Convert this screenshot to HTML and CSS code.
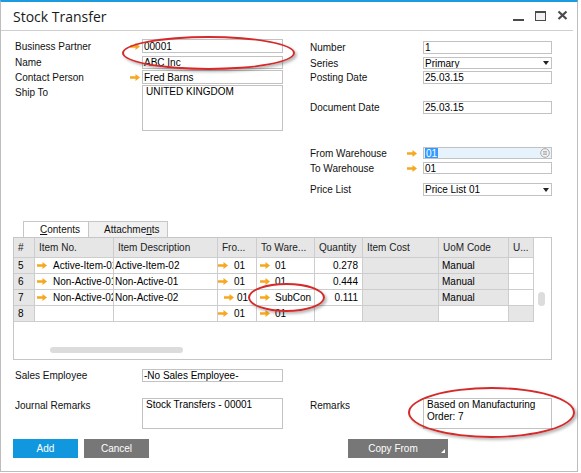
FILE: index.html
```html
<!DOCTYPE html>
<html lang="en">
<head>
<meta charset="utf-8">
<title>Stock Transfer</title>
<link rel="stylesheet" href="styles.css">
</head>
<body>
<svg class="defs" width="0" height="0" aria-hidden="true">
  <defs>
    <symbol id="arr" viewBox="0 0 10 7"><path d="M0 2.2H5.5V0L10 3.5L5.5 7V4.8H0Z" fill="#f6a81f"/></symbol>
  </defs>
</svg>
<div class="window">
  <div class="titlebar">
    <div class="title">Stock Transfer</div>
    <svg class="wincontrols" width="58" height="14" viewBox="0 0 58 14">
      <rect x="1" y="10" width="11" height="2" fill="#4a4a4a"/>
      <rect x="23.5" y="2.5" width="10" height="9" fill="#f2f2f2" stroke="#4a4a4a"/>
      <rect x="23" y="2" width="11" height="2" fill="#4a4a4a"/>
      <path d="M46.5 2.5L54.5 10M54.5 2.5L46.5 10" stroke="#4a4a4a" stroke-width="2.2"/>
    </svg>
  </div>

  <div class="header">
    <div class="col-left">
      <div class="row r-bp"><span class="lbl">Business Partner</span><span class="lnk"><svg class="arr"><use href="#arr"/></svg></span><div class="field">00001</div></div>
      <div class="row r-name"><span class="lbl">Name</span><span class="lnk"></span><div class="field">ABC Inc</div></div>
      <div class="row r-cp"><span class="lbl">Contact Person</span><span class="lnk"><svg class="arr"><use href="#arr"/></svg></span><div class="field">Fred Barns</div></div>
      <div class="row r-ship"><span class="lbl">Ship To</span><span class="lnk"></span><div class="field area">UNITED KINGDOM</div></div>
    </div>
    <div class="col-right">
      <div class="row r-num"><span class="lbl">Number</span><span class="lnk"></span><div class="field">1</div></div>
      <div class="row r-ser"><span class="lbl">Series</span><span class="lnk"></span><div class="field"><span class="val">Primary</span><span class="tri"></span></div></div>
      <div class="row r-post"><span class="lbl">Posting Date</span><span class="lnk"></span><div class="field">25.03.15</div></div>
      <div class="row r-doc"><span class="lbl">Document Date</span><span class="lnk"></span><div class="field">25.03.15</div></div>
      <div class="row r-from"><span class="lbl">From Warehouse</span><span class="lnk"><svg class="arr"><use href="#arr"/></svg></span><div class="field focus"><span class="val"><span class="sel">01</span></span><svg class="listicon" width="10" height="10" viewBox="0 0 10 10"><circle cx="5" cy="5" r="4.3" fill="#f4f4f4" stroke="#a8a8a8"/><path d="M3 3.6H7M3 5H7M3 6.4H7" stroke="#a8a8a8" stroke-width="0.9"/></svg></div></div>
      <div class="row r-to"><span class="lbl">To Warehouse</span><span class="lnk"><svg class="arr"><use href="#arr"/></svg></span><div class="field">01</div></div>
      <div class="row r-price"><span class="lbl">Price List</span><span class="lnk"></span><div class="field"><span class="val">Price List 01</span><span class="tri"></span></div></div>
    </div>
  </div>

  <div class="tabs">
    <div class="tab active"><span class="ul">C</span>ontents</div>
    <div class="tab">Attachme<span class="ul">n</span>ts</div>
  </div>

  <div class="gridbox">
    <div class="grid">
      <div class="c h">#</div>
      <div class="c h">Item No.</div>
      <div class="c h">Item Description</div>
      <div class="c h">Fro...</div>
      <div class="c h">To Ware...</div>
      <div class="c h">Quantity</div>
      <div class="c h">Item Cost</div>
      <div class="c h">UoM Code</div>
      <div class="c h">U...</div>

      <div class="c g num">5</div>
      <div class="c lk"><svg class="arr"><use href="#arr"/></svg><span>Active-Item-02</span></div>
      <div class="c d">Active-Item-02</div>
      <div class="c lk fr"><svg class="arr"><use href="#arr"/></svg><span>01</span></div>
      <div class="c lk to"><svg class="arr"><use href="#arr"/></svg><span>01</span></div>
      <div class="c q">0.278</div>
      <div class="c g"></div>
      <div class="c g u">Manual</div>
      <div class="c"></div>

      <div class="c g num">6</div>
      <div class="c lk"><svg class="arr"><use href="#arr"/></svg><span>Non-Active-01</span></div>
      <div class="c d">Non-Active-01</div>
      <div class="c lk fr"><svg class="arr"><use href="#arr"/></svg><span>01</span></div>
      <div class="c lk to"><svg class="arr"><use href="#arr"/></svg><span>01</span></div>
      <div class="c q">0.444</div>
      <div class="c g"></div>
      <div class="c g u">Manual</div>
      <div class="c"></div>

      <div class="c g num">7</div>
      <div class="c lk"><svg class="arr"><use href="#arr"/></svg><span>Non-Active-02</span></div>
      <div class="c d">Non-Active-02</div>
      <div class="c lk fr shift"><svg class="arr"><use href="#arr"/></svg><span>01</span></div>
      <div class="c lk to"><svg class="arr"><use href="#arr"/></svg><span>SubCon</span></div>
      <div class="c q">0.111</div>
      <div class="c g"></div>
      <div class="c g u">Manual</div>
      <div class="c"></div>

      <div class="c g num">8</div>
      <div class="c"></div>
      <div class="c"></div>
      <div class="c lk fr"><svg class="arr"><use href="#arr"/></svg><span>01</span></div>
      <div class="c lk to"><svg class="arr"><use href="#arr"/></svg><span>01</span></div>
      <div class="c"></div>
      <div class="c g"></div>
      <div class="c"></div>
      <div class="c g"></div>
    </div>
    <div class="vthumb"></div>
    <div class="hthumb"></div>
  </div>

  <div class="footer">
    <div class="col-left">
      <div class="row r-sales"><span class="lbl">Sales Employee</span><span class="lnk"></span><div class="field">-No Sales Employee-</div></div>
      <div class="row r-jr"><span class="lbl">Journal Remarks</span><span class="lnk"></span><div class="field area2">Stock Transfers - 00001</div></div>
    </div>
    <div class="col-right">
      <div class="row r-rem"><span class="lbl">Remarks</span><span class="lnk"></span><div class="field area2">Based on Manufacturing Order: 7</div></div>
    </div>
  </div>

  <div class="buttons">
    <div class="btn add">Add</div>
    <div class="btn cancel">Cancel</div>
    <div class="btn copy">Copy From<span class="corner"></span></div>
  </div>
</div>

<div class="mark m1"></div>
<div class="mark m2"></div>
<div class="mark m3"></div>
</body>
</html>
```

FILE: styles.css
```css
* { box-sizing: border-box; }
html, body { margin: 0; padding: 0; background: #fff; }
body {
  font-family: "Liberation Sans", Arial, sans-serif;
  font-size: 10px;
  color: #111;
  width: 581px;
  height: 473px;
  overflow: hidden;
  position: relative;
}
.defs { position: absolute; width: 0; height: 0; }

.window {
  width: 578px;
  height: 472px;
  border: 1px solid #bdbdbd;
  border-top: 2px solid #1c9be0;
  background: #fff;
}

/* title bar */
.titlebar {
  height: 29px;
  margin-right: 4px;
  border-bottom: 1px solid #cfcfcf;
  display: flex;
  align-items: flex-start;
}
.title {
  font-family: "Open Sans", "Liberation Sans", sans-serif;
  font-size: 14px;
  line-height: 20px;
  color: #1a1a1a;
  padding: 5px 0 0 12px;
}
.wincontrols { margin: 7px 3px 0 auto; display: block; }

/* header form */
.header { display: flex; padding-left: 14px; }
.col-left { width: 268px; display: flex; flex-direction: column; }
.col-right { width: 242px; margin-left: 27px; display: flex; flex-direction: column; }
.row { display: flex; align-items: center; }
.lbl { line-height: 12px; padding-top: 1px; color: #111; white-space: nowrap; }
.col-left .lbl { width: 115px; }
.col-left .lnk { width: 12px; }
.col-right .lbl { width: 97px; }
.col-right .lnk { width: 16px; }
.lnk { display: flex; align-items: center; height: 100%; }
.arr { width: 10px; height: 7px; display: block; flex: none; }

.field {
  flex: 1;
  height: 100%;
  border: 1px solid #c2c2c2;
  background: #fff;
  padding: 0 1px;
  display: flex;
  align-items: center;
  white-space: nowrap;
  overflow: hidden;
  color: #000;
}
.field .val { flex: 1; }
.tri {
  width: 0; height: 0;
  border-left: 3.5px solid transparent;
  border-right: 3.5px solid transparent;
  border-top: 4px solid #222;
  margin-right: 1px;
}
.field.focus { background: #e6f3fc; padding-left: 1px; }
.sel { background: #3399ff; color: #fff; padding: 0 1px; line-height: 11px; display: inline-block; }
.listicon { display: block; flex: none; }

.r-bp { margin-top: 8px; height: 14px; }
.r-name { margin-top: 3px; height: 13px; }
.r-cp { margin-top: 1px; height: 14px; }
.r-ship { margin-top: 1px; height: 46px; align-items: flex-start; }
.r-ship .lbl { line-height: 14px; padding-top: 1px; }
.field.area { align-items: flex-start; padding: 0 3px; line-height: 12px; }

.r-num { margin-top: 10px; height: 13px; }
.r-ser { margin-top: 3px; height: 12px; }
.r-post { margin-top: 2px; height: 13px; }
.r-doc { margin-top: 17px; height: 13px; }
.r-from { margin-top: 33px; height: 12px; }
.r-to { margin-top: 3px; height: 12px; }
.r-price { margin-top: 9px; height: 13px; }

/* tabs */
.tabs { display: flex; margin: 25px 0 0 22px; height: 16px; }
.tab {
  height: 16px;
  border: 1px solid #c6c6c6;
  border-bottom: none;
  line-height: 15px;
  padding-left: 16px;
  color: #111;
}
.tab.active { width: 66px; background: #fff; }
.tab + .tab { width: 79px; border-left: none; background: #f0f0f0; padding-left: 15px; }
.ul { text-decoration: underline; }

/* grid */
.gridbox {
  position: relative;
  margin-left: 12px;
  width: 539px;
  height: 123px;
  border: 1px solid #c6c6c6;
}
.grid {
  display: grid;
  grid-template-columns: 21px 79px 104px 39px 58px 48px 76px 70px 25px;
  grid-template-rows: 20px 16px 16px 16px 16px;
  width: 520px;
}
.c {
  border-right: 1px solid #cdcdcd;
  border-bottom: 1px solid #cdcdcd;
  background: #fff;
  white-space: nowrap;
  overflow: hidden;
  line-height: 15px;
  padding: 0 1px;
  color: #000;
  display: flex;
  align-items: center;
}
.c.h { background: #e6e6e6; color: #222; padding-left: 4px; line-height: 19px; }
.c.g { background: #e6e6e6; }
.c.num { padding-left: 4px; }
.c.lk { padding-left: 2px; }
.c.lk .arr { margin-right: 6px; }
.c.lk span { flex: none; }
.c.fr { padding-left: 0; }
.c.fr.shift { padding-left: 6px; }
.c.fr.shift .arr { margin-right: 3px; }
.c.to { padding-left: 3px; }
.c.to .arr { margin-right: 5px; }
.c.q { justify-content: flex-end; padding-right: 4px; }
.c.u { padding-left: 3px; }

.vthumb {
  position: absolute;
  left: 524px; top: 54px;
  width: 7px; height: 14px;
  border-radius: 4px;
  background: #dcdcdc;
}
.hthumb {
  position: absolute;
  left: 36px; top: 109px;
  width: 133px; height: 6px;
  border-radius: 3px;
  background: #dcdcdc;
}

/* footer */
.footer { display: flex; padding-left: 14px; }
.r-sales { margin-top: 9px; height: 13px; }
.r-jr { margin-top: 16px; height: 31px; align-items: flex-start; }
.r-rem { margin-top: 38px; height: 31px; align-items: flex-start; }
.r-jr .lbl, .r-rem .lbl { line-height: 14px; padding-top: 1px; }
.field.area2 {
  align-items: flex-start;
  white-space: normal;
  padding: 0 3px;
  line-height: 12px;
}

/* buttons */
.buttons { display: flex; margin-top: 10px; padding-left: 12px; }
.btn {
  height: 19px;
  line-height: 19px;
  text-align: center;
  color: #fff;
  position: relative;
}
.btn.add { width: 65px; background: #1097dd; }
.btn.cancel { width: 65px; margin-left: 6px; background: #777; }
.btn.copy { width: 100px; margin-left: 199px; background: #777; padding-right: 10px; }
.corner {
  position: absolute;
  right: 3px; bottom: 5px;
  width: 0; height: 0;
  border-left: 4px solid transparent;
  border-bottom: 4px solid #fff;
}

/* red annotation ellipses */
.mark {
  position: absolute;
  border: 2.6px solid #d52a2a;
  border-radius: 50%;
  box-shadow: 2px 2px 3px rgba(0, 0, 0, 0.28);
}
.m1 { left: 122px; top: 36px; width: 173px; height: 34px; }
.m2 { left: 248px; top: 283px; width: 77px; height: 29px; }
.m3 { left: 408px; top: 387px; width: 167px; height: 51px; }
```
